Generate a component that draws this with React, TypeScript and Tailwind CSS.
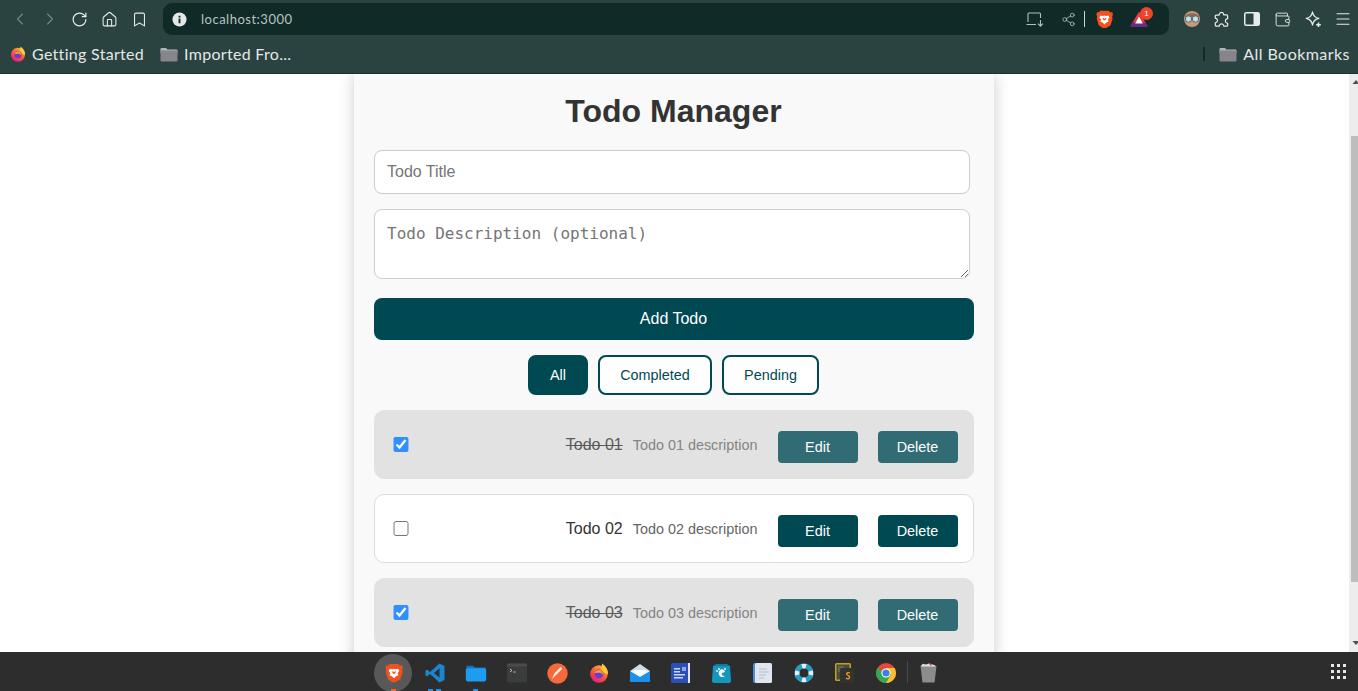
import { ChevronLeft, ChevronRight, RotateCw, Home, Bookmark, Share2, Wallet, Menu } from "lucide-react";

const sans = "font-['Liberation_Sans',Arial,sans-serif]";

function BraveIcon({ size = 20 }: { size?: number }) {
  return (
    <svg width={size} height={size * 1.1} viewBox="0 0 20 22">
      <path d="M5 1h10l2 2 2-.5L20 5l-1 3 .6 2-2.400 8-5.500 3.500h-3.400L3.200 18 .8 10l.6-2-1-3 1.100-2.500L3 3z" fill="#f1501f" />
      <path d="M5.500 6.500 8 7l2-.6 2 .6 2.500-.5 1.400 2L14 11.500l1 2-3 1.500-2 2-2-2-3-1.500 1-2-2-3z" fill="#ffffff" />
      <path d="M7.500 9.500h1.600l.9 1 .9-1h1.600L11 12h-2z" fill="#f1501f" />
    </svg>
  );
}

function FirefoxIcon({ size = 16 }: { size?: number }) {
  return (
    <svg width={size} height={size} viewBox="0 0 20 20">
      <defs>
        <linearGradient id={`ff${size}`} x1="0.8" y1="0" x2="0.2" y2="1">
          <stop offset="0" stopColor="#ffbd2e" />
          <stop offset="0.5" stopColor="#ff5a36" />
          <stop offset="1" stopColor="#e31587" />
        </linearGradient>
      </defs>
      <circle cx="10" cy="11" r="8.800" fill={`url(#ff${size})`} />
      <path d="M13 .6c3 2 6 5 6 10.400L15 10c-.4-1.400-2-3.500-3.500-4 1.200-1.500 1.700-3.400 1.500-5.400z" fill="#ffc933" />
      <circle cx="10" cy="11" r="4.400" fill="#6d3bd1" />
      <path d="M5.500 10c1-2.500 3.500-3.500 5.500-3 2.400.7 3.400 3 2.700 5-.5-1.600-2-2.400-3.700-2.300z" fill="#f2a12d" />
    </svg>
  );
}

function Folder({ dock = false }: { dock?: boolean }) {
  return (
    <svg width={dock ? 22 : 18} height={dock ? 18 : 15} viewBox="0 0 18 15">
      {dock ? (
        <>
          <path d="M1 1.500h5.500l1.500 1.500h9v3H1z" fill="#1272c7" />
          <rect x="0.500" y="3.500" width="17" height="11" rx="1.500" fill="#1e9cf0" />
        </>
      ) : (
        <>
          <path d="M0.500 2a1 1 0 0 1 1-1h4.500l1.500 1.500h9a1 1 0 0 1 1 1V6H.5z" fill="#b3b3b6" />
          <rect x="0.500" y="3.500" width="17" height="11" rx="1" fill="#86858c" />
        </>
      )}
    </svg>
  );
}

function Toolbar() {
  return (
    <div className="flex h-[38px] items-center text-[#e6ecea]">
      <div className="flex w-[163px] items-center pl-[10px]">
        <div className="flex w-[30px] justify-start"><ChevronLeft size={20} strokeWidth={1.3} className="text-[#74898a]" /></div>
        <div className="flex w-[30px] justify-start"><ChevronRight size={20} strokeWidth={1.3} className="text-[#74898a]" /></div>
        <div className="flex w-[30px] justify-start"><RotateCw size={17} strokeWidth={1.7} className="ml-[1px]" /></div>
        <div className="flex w-[30px] justify-start"><Home size={17} strokeWidth={1.5} className="ml-[1px]" /></div>
        <div className="flex w-[30px] justify-start"><Bookmark size={17} strokeWidth={1.5} className="ml-[1px]" /></div>
      </div>
      <div className="flex h-[32px] w-[1006px] items-center rounded-[9px] bg-[#0f2a27] pl-[9px]">
        <svg width="15" height="15" viewBox="0 0 16 16">
          <circle cx="8" cy="8" r="7.500" fill="#e4e9e8" />
          <rect x="7" y="7" width="2" height="5" fill="#0f2a27" />
          <rect x="7" y="4" width="2" height="2" fill="#0f2a27" />
        </svg>
        <span className="ml-[14px] mt-[2px] font-['Lato',sans-serif] text-[13px] tracking-[0.5px] text-[#b9c4c2]">localhost:3000</span>
        <div className="ml-auto flex items-center">
          <svg width="18" height="15" viewBox="0 0 18 15" fill="none" stroke="#b4c0be" strokeWidth="1.100">
            <path d="M2 10V2a1 1 0 0 1 1-1h10.500a1 1 0 0 1 1 1v4M.5 12.500h9.500" />
            <path d="M14.500 8v6M12 11.700l2.500 2.500 2.500-2.500" />
          </svg>
          <Share2 size={15} strokeWidth={1.3} className="ml-[17px] text-[#b4c0be]" />
          <div className="ml-[8px] h-[16px] w-px bg-[#c9d2d0]" />
          <div className="ml-[11px] flex"><BraveIcon size={17} /></div>
          <div className="relative ml-[17px] h-[16px] w-[18px]">
            <svg width="18" height="16" viewBox="0 0 18 16">
              <path d="M9 .5 17.800 15.500H.2z" fill="#e8393f" />
              <path d="M2.800 11.500h12.400l2.600 4H.2z" fill="#66298f" />
              <path d="M9 5.500l3.800 7H5.200z" fill="#ffffff" />
            </svg>
            <span className={`absolute -top-[4px] left-[10px] flex h-[13px] w-[13px] items-center justify-center rounded-full bg-[#f0432c] text-[8px] text-white ${sans}`}>1</span>
          </div>
          <div className="w-[21px]" />
        </div>
      </div>
      <div className="flex flex-1 items-center">
        <div className="ml-[14px] flex w-[18px] justify-center">
          <svg width="18" height="18" viewBox="0 0 18 18">
            <circle cx="9" cy="9" r="8" fill="#c99a7a" />
            <path d="M2 7c1-5 13-5 14 0z" fill="#8b6a4f" />
            <circle cx="5.500" cy="9" r="3.200" fill="#bfe0ea" stroke="#55666b" />
            <circle cx="12.500" cy="9" r="3.200" fill="#bfe0ea" stroke="#55666b" />
          </svg>
        </div>
        <svg width="17" height="17" viewBox="0 0 18 18" fill="none" stroke="#e6ecea" strokeWidth="1.300" strokeLinejoin="round" className="ml-[12px]">
          <path d="M6.800 3.200a2.300 2.300 0 0 1 4.400 0l.3 1h3a1 1 0 0 1 1 1v2.900l-.9.300a2.300 2.300 0 0 0 0 4.300l.9.300v1.800a1.300 1.300 0 0 1-1.300 1.300h-2.700l-.3-.9a2.300 2.300 0 0 0-4.400 0l-.3.9H3.700a1.300 1.300 0 0 1-1.300-1.300v-2.400l.9-.3a2.300 2.300 0 0 0 0-4.300l-.9-.3V5.300a1 1 0 0 1 1-1h3z" />
        </svg>
        <svg width="16" height="14" viewBox="0 0 16 14" className="ml-[14px]">
          <rect x="0.750" y="0.750" width="14.500" height="12.500" rx="1.500" fill="none" stroke="#e6ecea" strokeWidth="1.500" />
          <rect x="9.500" y="1" width="5.500" height="12" fill="#e6ecea" />
        </svg>
        <Wallet size={17} strokeWidth={1.3} className="ml-[14px]" />
        <svg width="17" height="17" viewBox="0 0 17 17" fill="none" stroke="#e6ecea" strokeWidth="1.300" strokeLinejoin="round" className="ml-[14px]">
          <path d="M7.500 1c.7 3.700 2.600 5.700 6.300 6.400-3.700.7-5.600 2.700-6.300 6.600-.7-3.900-2.600-5.900-6.300-6.600C4.900 6.700 6.800 4.700 7.500 1z" />
          <path d="M13.500 11.500v4.500M11.200 13.700h4.600" strokeWidth="1.500" />
        </svg>
        <Menu size={18} strokeWidth={1.4} className="ml-[12px]" />
      </div>
    </div>
  );
}

function BookmarksBar() {
  return (
    <div className="flex h-[36px] items-center border-b border-[#1d2f2d] pb-[3px] font-['Lato',sans-serif] text-[16px] tracking-[0.3px] text-[#e3e9e7]">
      <div className="ml-[10px] flex"><FirefoxIcon /></div>
      <span className="ml-[6px]">Getting Started</span>
      <div className="ml-[16px] flex"><Folder /></div>
      <span className="ml-[6px]">Imported Fro...</span>
      <div className="ml-auto h-[14px] w-[2px] bg-[#0f2a27]" />
      <div className="ml-[14px] flex"><Folder /></div>
      <span className="ml-[6px] mr-[8px] tracking-[0.45px]">All Bookmarks</span>
    </div>
  );
}

function TodoRow({ n, done }: { n: string; done: boolean }) {
  return (
    <div className={`flex h-[69px] items-center rounded-[10px] border pl-[18px] pr-[15px] ${done ? "border-[#dddddd] bg-[#dddddd] opacity-80" : "border-[#dddddd] bg-white"}`}>
      <input type="checkbox" readOnly checked={done} className="h-[15.5px] w-[15.5px] shrink-0 appearance-auto" />
      <span className={`ml-auto text-[16px] text-[#333333] ${done ? "line-through" : ""}`}>Todo {n}</span>
      <span className="ml-[10px] mt-[2px] text-[14.4px] text-[#666666]">Todo {n} description</span>
      <div className="relative top-[2px] ml-[20.5px] flex gap-[20px] text-[14.4px] text-white">
        <button className="h-[32px] w-[80px] rounded-[4px] bg-[#004953] pr-[1px] pt-[2px]">Edit</button>
        <button className="h-[32px] w-[80px] rounded-[4px] bg-[#004953] pr-[1px] pt-[2px]">Delete</button>
      </div>
    </div>
  );
}

function Page() {
  return (
    <div className="flex min-h-0 flex-1 bg-white">
      <div className="flex min-w-0 flex-1 justify-center overflow-hidden pr-[1px]">
        <div className={`h-[640px] w-[640px] shrink-0 bg-[#f9f9f9] px-[20px] pt-[19px] shadow-[0_0_15px_rgba(0,0,0,0.2)] ${sans}`}>
          <h1 className="pr-[1px] text-center text-[32px] font-bold leading-[37px] text-[#333333]">Todo Manager</h1>
          <input
            readOnly
            placeholder="Todo Title"
            className="mt-[20px] block h-[44px] w-[596px] rounded-[8px] border border-[#cccccc] bg-white px-[12px] text-[16px] outline-none placeholder:text-[#757575]"
          />
          <textarea
            readOnly
            placeholder="Todo Description (optional)"
            className="mt-[15px] block h-[70px] w-[596px] rounded-[8px] border border-[#cccccc] bg-white px-[12px] py-[12px] font-['DejaVu_Sans_Mono',monospace] text-[16px] outline-none placeholder:text-[#757575]"
          />
          <button className="mt-[19px] block h-[42px] w-[600px] rounded-[8px] bg-[#004953] pr-[1px] text-[16px] text-white">Add Todo</button>
          <div className="mt-[15px] flex justify-center gap-[10px] pr-[1px] text-[14.4px]">
            <button className="h-[40px] w-[60px] rounded-[8px] border-2 border-[#004953] bg-[#004953] pt-[2px] text-white">All</button>
            <button className="h-[40px] w-[114px] rounded-[8px] border-2 border-[#004953] bg-white pt-[2px] text-[#004953]">Completed</button>
            <button className="h-[40px] w-[97px] rounded-[8px] border-2 border-[#004953] bg-white pt-[2px] text-[#004953]">Pending</button>
          </div>
          <div className="mt-[15px] flex flex-col gap-[15px]">
            <TodoRow n="01" done />
            <TodoRow n="02" done={false} />
            <TodoRow n="03" done />
          </div>
        </div>
      </div>
      <div className="flex w-[9px] shrink-0 flex-col items-center overflow-hidden bg-[#ededed]">
        <svg width="9" height="9" viewBox="0 0 9 9" className="mt-[4px] translate-x-[2.5px]"><path d="M4.500 2 8 6H1z" fill="#505050" /></svg>
        <div className="ml-[2px] mt-[49px] h-[446px] w-[7px] bg-[#bdbdbd]" />
        <div className="flex-1" />
        <svg width="9" height="9" viewBox="0 0 9 9" className="mb-[5px] translate-x-[2.5px]"><path d="M4.500 7 8 3H1z" fill="#505050" /></svg>
      </div>
    </div>
  );
}

function DockSlot({ children, active, dots }: { children: React.ReactNode; active?: boolean; dots?: string[] }) {
  return (
    <div className="relative flex h-[39px] w-[41px] items-center justify-center pt-[3px]">
      {active && <div className="absolute left-[1px] top-[2px] h-[38px] w-[38px] rounded-full bg-[#585858]" />}
      <div className="relative flex">{children}</div>
      {dots && (
        <div className="absolute bottom-0 left-0 flex w-full justify-center gap-[3px]">
          {dots.map((c, i) => (
            <div key={i} className="h-[2px] w-[5px]" style={{ backgroundColor: c }} />
          ))}
        </div>
      )}
    </div>
  );
}

function Dock() {
  return (
    <div className="flex h-[39px] shrink-0 items-center bg-[#2d2d2d] pl-[373px]">
      <DockSlot active dots={["#e8643a"]}><BraveIcon size={18} /></DockSlot>
      <DockSlot dots={["#2a8fd8", "#2a8fd8"]}>
        <svg width="20" height="20" viewBox="0 0 20 20">
          <path d="M14.500 0.500 19.500 3v14l-5 2.500L5 11l-3 2.500-1.500-1v-5l1.500-1L5 9zM14.500 5.500 9 10l5.500 4.500z" fill="#1a86d0" />
        </svg>
      </DockSlot>
      <DockSlot dots={["#2a8fd8"]}><Folder dock /></DockSlot>
      <DockSlot>
        <svg width="20" height="20" viewBox="0 0 20 20">
          <rect width="20" height="19" y="0.500" rx="2" fill="#3a3d3c" />
          <rect width="20" height="3" y="0.500" rx="1" fill="#4a4c4b" />
          <path d="M3 6l2 1.500L3 9" stroke="#dddddd" strokeWidth="0.800" fill="none" />
          <path d="M6 9h3" stroke="#bbbbbb" strokeWidth="0.800" />
        </svg>
      </DockSlot>
      <DockSlot>
        <svg width="21" height="21" viewBox="0 0 21 21">
          <circle cx="10.500" cy="10.500" r="10.200" fill="#f5693a" />
          <path d="M5 16l2-5 6-6.500c1-.8 2.500.6 1.700 1.700L9 12z" fill="#ffffff" opacity="0.900" />
        </svg>
      </DockSlot>
      <DockSlot><FirefoxIcon size={20} /></DockSlot>
      <DockSlot>
        <svg width="20" height="18" viewBox="0 0 20 18">
          <path d="M10 0 20 7H0z" fill="#c9dff0" />
          <rect y="7" width="20" height="11" rx="1" fill="#1d8fec" />
          <path d="M0 7l10 6 10-6" fill="#f5f9fc" />
          <path d="M3 6h14l-7 4z" fill="#ffffff" />
        </svg>
      </DockSlot>
      <DockSlot>
        <svg width="19" height="20" viewBox="0 0 19 20">
          <rect width="19" height="20" rx="1.500" fill="#2b4fb8" />
          <rect x="17" width="2" height="20" fill="#dfe6f5" />
          <rect x="3" y="5" width="6" height="1.500" fill="#cdd8f4" />
          <rect x="3" y="8" width="6" height="1.500" fill="#cdd8f4" />
          <rect x="3" y="11" width="11" height="1.500" fill="#cdd8f4" />
          <rect x="3" y="14" width="9" height="1.500" fill="#cdd8f4" />
          <rect x="11" y="4" width="4" height="4" fill="#8fa8e8" />
        </svg>
      </DockSlot>
      <DockSlot>
        <svg width="19" height="20" viewBox="0 0 19 20">
          <path d="M1 3h17l1 15a2 2 0 0 1-2 2H2a2 2 0 0 1-2-2z" fill="#1597bd" />
          <path d="M4 1h11l3 2H1z" fill="#0f7b9c" />
          <path d="M10 6c-3 1-4 3-3 6 1 2 4 3 6 1-3 0-4-1-3-3 1 0 3-1 3-2z" fill="#ffffff" />
          <circle cx="7" cy="6" r="0.900" fill="#ffffff" />
          <circle cx="5" cy="8" r="0.900" fill="#ffffff" />
          <circle cx="13" cy="6" r="0.900" fill="#ffffff" />
        </svg>
      </DockSlot>
      <DockSlot>
        <svg width="19" height="20" viewBox="0 0 19 20">
          <rect width="17" height="20" rx="2" fill="#4a90d9" />
          <rect x="2" width="17" height="20" rx="1.500" fill="#dfe6ef" />
          <path d="M6 6h8M6 9h10M6 12h7M6 15h5" stroke="#b4c0cf" strokeWidth="1.200" />
        </svg>
      </DockSlot>
      <DockSlot>
        <svg width="20" height="20" viewBox="0 0 20 20">
          <circle cx="10" cy="10" r="7.200" fill="none" stroke="#2b9cc4" strokeWidth="5" />
          <path d="M7.500 1 12.500 1 11.500 5.500H8.500zM7.500 19l5 0-1-4.500H8.500zM1 7.500v5l4.500-1V8.500zM19 7.500v5l-4.500-1V8.500z" fill="#e8eef0" />
        </svg>
      </DockSlot>
      <DockSlot>
        <svg width="19" height="20" viewBox="0 0 19 20">
          <rect x="0" y="0" width="16" height="18" rx="1.500" fill="#c7a020" />
          <rect x="1.500" y="1.500" width="13" height="15" fill="#4a4a3e" />
          <path d="M3 4h6M3 6h4M3 8h5" stroke="#7a8a6a" strokeWidth="0.900" />
          <rect x="5" y="5" width="14" height="15" rx="1.500" fill="#33332f" />
          <path d="M15 10c-2-1-4 0-3 1.500s3 1 2.500 3-2.500 1.500-3.500.5" stroke="#f0a020" strokeWidth="1.300" fill="none" />
        </svg>
      </DockSlot>
      <DockSlot>
        <svg width="20" height="20" viewBox="0 0 20 20">
          <circle cx="10" cy="10" r="10" fill="#e8453c" />
          <path d="M10 10 1.340 5A10 10 0 0 0 10 20l5-8.660z" fill="#34a853" />
          <path d="M10 10l5 1.340L10 20A10 10 0 0 0 18.660 5H10z" fill="#fbc02d" />
          <circle cx="10" cy="10" r="4.600" fill="#ffffff" />
          <circle cx="10" cy="10" r="3.600" fill="#3f7fe8" />
        </svg>
      </DockSlot>
      <div className="ml-[1px] h-[22px] w-px bg-[#4a4a4a]" />
      <div className="ml-[12px] flex pt-[3px]">
        <svg width="17" height="20" viewBox="0 0 17 20">
          <path d="M0.500 3h16l-2 16.500h-12z" fill="#8c8c8c" />
          <path d="M1 2.500 3 .8l3 .8 3-1 3 .6 3.500 1.300-.5 1H1.500z" fill="#dddddd" />
          <path d="M9 .8l3 .4-1 1.800z" fill="#d04a4a" />
        </svg>
      </div>
      <div className="ml-auto mr-[12px] grid grid-cols-3 gap-[3px]">
        {[0, 1, 2, 3, 4, 5, 6, 7, 8].map((i) => (
          <div key={i} className="h-[3px] w-[3px] bg-[#e8e8e8]" />
        ))}
      </div>
    </div>
  );
}

export default function App() {
  return (
    <div className="flex h-[691px] w-[1358px] flex-col overflow-hidden">
      <div className="shrink-0 bg-[#2a4240]">
        <Toolbar />
        <BookmarksBar />
      </div>
      <Page />
      <Dock />
    </div>
  );
}
